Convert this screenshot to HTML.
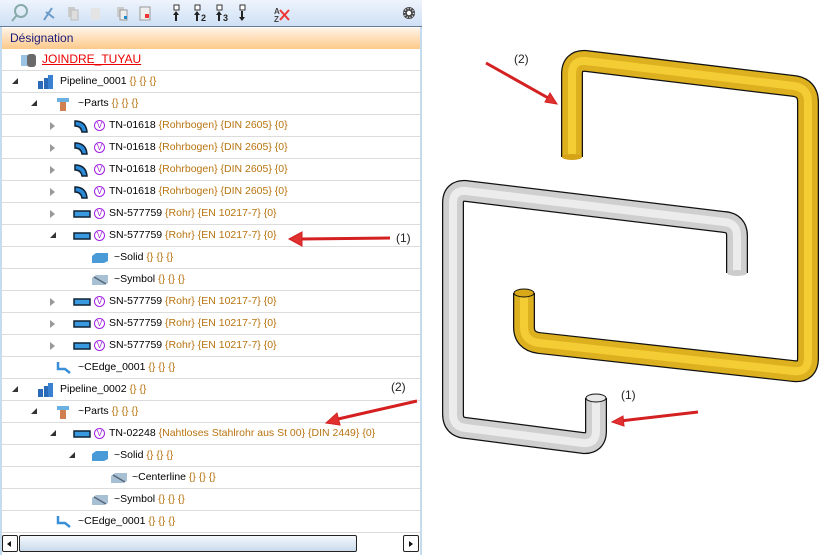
<!DOCTYPE html>
<html><head><meta charset="utf-8"><style>
*{margin:0;padding:0;box-sizing:border-box}
body{width:820px;height:555px;background:#fff;position:relative;overflow:hidden;font-family:"Liberation Sans",sans-serif;font-size:10.5px;color:#000}
.tb{position:absolute;left:0;top:0;width:422px;height:27px;background:linear-gradient(#eef4fc,#cfe0f5);border-bottom:1px solid #6a7a90}
.panel{position:absolute;left:0;top:27px;width:422px;height:528px;border-left:2px solid #c4dcee;border-right:2px solid #c4dcee}
.hdr{position:absolute;left:2px;top:28px;width:418px;height:21px;background:linear-gradient(#fff3e6,#fcc98a);color:#1a1a7a;font-size:12px;line-height:21px;padding-left:8px}
.row{position:absolute;left:2px;width:418px;height:22px;border-bottom:1px solid #dcdcdc;line-height:21px;white-space:nowrap}
.row span.t{position:absolute;top:0}
.b{color:#b87410}
.exp{position:absolute;top:7px;width:0;height:0}
.open{border-left:6px solid transparent;border-bottom:6px solid #333}
.closed{border-top:4px solid transparent;border-bottom:4px solid transparent;border-left:5px solid #999}
.v{position:absolute;top:5px;width:11px;height:11px;border:1px solid #a020e0;border-radius:50%;color:#a020e0;font-size:8px;line-height:9px;text-align:center}
.ic{position:absolute}
.sb{position:absolute;top:535px;height:17px;border:1px solid #222;border-radius:2px;background:linear-gradient(#f4f8fc,#c9daeb)}
.lbl{position:absolute;font-size:12px;color:#222}
</style></head><body>
<div class="tb">
<svg width="422" height="27" style="position:absolute;left:0;top:0">
<circle cx="21" cy="11" r="6" fill="none" stroke="#8aa" stroke-width="2"/><line x1="17" y1="15" x2="12" y2="21" stroke="#8aa" stroke-width="2"/>
<path d="M44 20 L52 8 M46 12 L54 18" stroke="#6a9ac8" stroke-width="2"/>
<rect x="68" y="7" width="7" height="10" fill="#ccc"/><rect x="71" y="10" width="7" height="10" fill="#ddd" stroke="#bbb"/>
<rect x="91" y="8" width="9" height="12" fill="#e4e4e4"/>
<rect x="117" y="7" width="7" height="10" fill="#ccc"/><rect x="120" y="10" width="7" height="10" fill="#eee" stroke="#999"/><rect x="124" y="16" width="3" height="3" fill="#28c"/>
<rect x="140" y="7" width="10" height="13" fill="#eee" stroke="#999"/><rect x="145" y="14" width="4" height="4" fill="#e33"/>
<g fill="#222"><rect x="174" y="5" width="5" height="5" fill="#fff" stroke="#333"/><path d="M176 11 l3 4h-6z M175 15h2v6h-2z"/>
<rect x="195" y="5" width="5" height="5" fill="#fff" stroke="#333"/><path d="M197 11 l3 4h-6z M196 15h2v6h-2z"/><text x="201" y="21" font-size="9" font-weight="bold">2</text>
<rect x="217" y="5" width="5" height="5" fill="#fff" stroke="#333"/><path d="M219 11 l3 4h-6z M218 15h2v6h-2z"/><text x="223" y="21" font-size="9" font-weight="bold">3</text>
<rect x="240" y="5" width="5" height="5" fill="#fff" stroke="#333"/><path d="M242 21 l3 -4h-6z M241 11h2v6h-2z"/></g>
<text x="274" y="14" font-size="8" font-weight="bold" fill="#444">A</text><text x="274" y="22" font-size="8" font-weight="bold" fill="#444">Z</text><path d="M280 10 l9 10 M289 10 l-9 10" stroke="#e33" stroke-width="2"/>
<circle cx="409" cy="13" r="6" fill="#444"/><circle cx="409" cy="13" r="4.5" fill="none" stroke="#eef4fc" stroke-width="1.5" stroke-dasharray="1 1.8"/><circle cx="409" cy="13" r="2.2" fill="#fff"/>
</svg></div>
<div class="panel"></div>
<div class="hdr">Désignation</div>

<div class="row" style="top:49px"><svg class="ic" style="left:18px;top:3px" width="18" height="16"><rect x="1" y="3" width="9" height="11" fill="#9bc3e6"/><rect x="7" y="2" width="9" height="13" rx="3" fill="#6a6a6a"/></svg><span class="t" style="left:40px;color:#e00;text-decoration:underline;font-size:12px">JOINDRE_TUYAU</span></div>
<div class="row" style="top:71px"><span class="exp open" style="left:10px"></span><svg class="ic" style="left:35px;top:3px" width="18" height="16"><rect x="1" y="7" width="5" height="8" fill="#2a6ab8"/><rect x="7" y="4" width="4" height="11" fill="#2a6ab8"/><rect x="11" y="1" width="5" height="14" fill="#3a80d0"/></svg><span class="t" style="left:58px">Pipeline_0001 <span class="b">{} {} {}</span></span></div>
<div class="row" style="top:93px"><span class="exp open" style="left:29px"></span><svg class="ic" style="left:54px;top:4px" width="14" height="15"><rect x="1" y="1" width="12" height="4" fill="#6ab0e0"/><rect x="4" y="5" width="6" height="9" fill="#d08050"/></svg><span class="t" style="left:76px">~Parts <span class="b">{} {} {}</span></span></div>

<div class="row" style="top:115px"><span class="exp closed" style="left:48px"></span><svg class="ic" style="left:71px;top:3px" width="18" height="16"><path d="M2 3 Q13 3 14 14 L9 14 Q8 8 2 8Z" fill="#2a8ad8" stroke="#123" stroke-width="1.5"/></svg><span class="v" style="left:92px">V</span><span class="t" style="left:107px">TN-01618 <span class="b">{Rohrbogen} {DIN 2605} {0}</span></span></div>
<div class="row" style="top:137px"><span class="exp closed" style="left:48px"></span><svg class="ic" style="left:71px;top:3px" width="18" height="16"><path d="M2 3 Q13 3 14 14 L9 14 Q8 8 2 8Z" fill="#2a8ad8" stroke="#123" stroke-width="1.5"/></svg><span class="v" style="left:92px">V</span><span class="t" style="left:107px">TN-01618 <span class="b">{Rohrbogen} {DIN 2605} {0}</span></span></div>
<div class="row" style="top:159px"><span class="exp closed" style="left:48px"></span><svg class="ic" style="left:71px;top:3px" width="18" height="16"><path d="M2 3 Q13 3 14 14 L9 14 Q8 8 2 8Z" fill="#2a8ad8" stroke="#123" stroke-width="1.5"/></svg><span class="v" style="left:92px">V</span><span class="t" style="left:107px">TN-01618 <span class="b">{Rohrbogen} {DIN 2605} {0}</span></span></div>
<div class="row" style="top:181px"><span class="exp closed" style="left:48px"></span><svg class="ic" style="left:71px;top:3px" width="18" height="16"><path d="M2 3 Q13 3 14 14 L9 14 Q8 8 2 8Z" fill="#2a8ad8" stroke="#123" stroke-width="1.5"/></svg><span class="v" style="left:92px">V</span><span class="t" style="left:107px">TN-01618 <span class="b">{Rohrbogen} {DIN 2605} {0}</span></span></div>
<div class="row" style="top:203px"><span class="exp closed" style="left:48px"></span><svg class="ic" style="left:71px;top:6px" width="18" height="10"><rect x="1" y="2" width="16" height="6" fill="#3a9ae0" stroke="#123" stroke-width="1.5"/></svg><span class="v" style="left:92px">V</span><span class="t" style="left:107px">SN-577759 <span class="b">{Rohr} {EN 10217-7} {0}</span></span></div>
<div class="row" style="top:225px"><span class="exp open" style="left:48px"></span><svg class="ic" style="left:71px;top:6px" width="18" height="10"><rect x="1" y="2" width="16" height="6" fill="#3a9ae0" stroke="#123" stroke-width="1.5"/></svg><span class="v" style="left:92px">V</span><span class="t" style="left:107px">SN-577759 <span class="b">{Rohr} {EN 10217-7} {0}</span></span></div>
<div class="row" style="top:247px"><svg class="ic" style="left:89px;top:5px" width="18" height="12"><path d="M1 4 L5 1 H17 V9 L13 11 H1Z" fill="#4a9ad8"/></svg><span class="t" style="left:112px">~Solid <span class="b">{} {} {}</span></span></div>
<div class="row" style="top:269px"><svg class="ic" style="left:89px;top:5px" width="18" height="12"><path d="M1 4 L5 1 H17 V9 L13 11 H1Z" fill="#a8c0d4"/><path d="M3 3 L15 10" stroke="#567" stroke-width="1.5"/></svg><span class="t" style="left:112px">~Symbol <span class="b">{} {} {}</span></span></div>
<div class="row" style="top:291px"><span class="exp closed" style="left:48px"></span><svg class="ic" style="left:71px;top:6px" width="18" height="10"><rect x="1" y="2" width="16" height="6" fill="#3a9ae0" stroke="#123" stroke-width="1.5"/></svg><span class="v" style="left:92px">V</span><span class="t" style="left:107px">SN-577759 <span class="b">{Rohr} {EN 10217-7} {0}</span></span></div>
<div class="row" style="top:313px"><span class="exp closed" style="left:48px"></span><svg class="ic" style="left:71px;top:6px" width="18" height="10"><rect x="1" y="2" width="16" height="6" fill="#3a9ae0" stroke="#123" stroke-width="1.5"/></svg><span class="v" style="left:92px">V</span><span class="t" style="left:107px">SN-577759 <span class="b">{Rohr} {EN 10217-7} {0}</span></span></div>
<div class="row" style="top:335px"><span class="exp closed" style="left:48px"></span><svg class="ic" style="left:71px;top:6px" width="18" height="10"><rect x="1" y="2" width="16" height="6" fill="#3a9ae0" stroke="#123" stroke-width="1.5"/></svg><span class="v" style="left:92px">V</span><span class="t" style="left:107px">SN-577759 <span class="b">{Rohr} {EN 10217-7} {0}</span></span></div>
<div class="row" style="top:357px"><svg class="ic" style="left:54px;top:4px" width="16" height="14"><path d="M2 1 V8 H9 L14 12" fill="none" stroke="#3a90d8" stroke-width="2.5"/></svg><span class="t" style="left:76px">~CEdge_0001 <span class="b">{} {} {}</span></span></div>
<div class="row" style="top:379px"><span class="exp open" style="left:10px"></span><svg class="ic" style="left:35px;top:3px" width="18" height="16"><rect x="1" y="7" width="5" height="8" fill="#2a6ab8"/><rect x="7" y="4" width="4" height="11" fill="#2a6ab8"/><rect x="11" y="1" width="5" height="14" fill="#3a80d0"/></svg><span class="t" style="left:58px">Pipeline_0002 <span class="b">{} {}</span></span></div>
<div class="row" style="top:401px"><span class="exp open" style="left:29px"></span><svg class="ic" style="left:54px;top:4px" width="14" height="15"><rect x="1" y="1" width="12" height="4" fill="#6ab0e0"/><rect x="4" y="5" width="6" height="9" fill="#d08050"/></svg><span class="t" style="left:76px">~Parts <span class="b">{} {} {}</span></span></div>
<div class="row" style="top:423px"><span class="exp open" style="left:48px"></span><svg class="ic" style="left:71px;top:6px" width="18" height="10"><rect x="1" y="2" width="16" height="6" fill="#3a9ae0" stroke="#123" stroke-width="1.5"/></svg><span class="v" style="left:92px">V</span><span class="t" style="left:107px">TN-02248 <span class="b">{Nahtloses Stahlrohr aus St 00} {DIN 2449} {0}</span></span></div>
<div class="row" style="top:445px"><span class="exp open" style="left:67px"></span><svg class="ic" style="left:89px;top:5px" width="18" height="12"><path d="M1 4 L5 1 H17 V9 L13 11 H1Z" fill="#4a9ad8"/></svg><span class="t" style="left:112px">~Solid <span class="b">{} {} {}</span></span></div>
<div class="row" style="top:467px"><svg class="ic" style="left:108px;top:5px" width="18" height="12"><path d="M1 4 L5 1 H17 V9 L13 11 H1Z" fill="#a8c0d4"/><path d="M3 3 L15 10" stroke="#567" stroke-width="1.5"/></svg><span class="t" style="left:130px">~Centerline <span class="b">{} {} {}</span></span></div>
<div class="row" style="top:489px"><svg class="ic" style="left:89px;top:5px" width="18" height="12"><path d="M1 4 L5 1 H17 V9 L13 11 H1Z" fill="#a8c0d4"/><path d="M3 3 L15 10" stroke="#567" stroke-width="1.5"/></svg><span class="t" style="left:112px">~Symbol <span class="b">{} {} {}</span></span></div>
<div class="row" style="top:511px"><svg class="ic" style="left:54px;top:4px" width="16" height="14"><path d="M2 1 V8 H9 L14 12" fill="none" stroke="#3a90d8" stroke-width="2.5"/></svg><span class="t" style="left:76px">~CEdge_0001 <span class="b">{} {} {}</span></span></div>

<div class="sb" style="left:2px;width:16px;background:#fff"></div>
<div class="sb" style="left:19px;width:338px"></div>
<div class="sb" style="left:403px;width:16px;background:#fff"></div>
<svg style="position:absolute;left:0;top:535px" width="422" height="18"><path d="M7 9 l4 -3 v6z" fill="#111"/><path d="M413 9 l-4 -3 v6z" fill="#111"/></svg>

<svg style="position:absolute;left:0;top:0" width="820" height="555">
<g fill="none" stroke-linejoin="round" stroke-linecap="butt">
<path d="M572 157 V74 Q572 60 586 61 L794 86 Q808 88 808 102 V358 Q808 373 793 371 L539 343 Q524 341 524 327 V293" stroke="#111" stroke-width="22"/>
<path d="M572 157 V74 Q572 60 586 61 L794 86 Q808 88 808 102 V358 Q808 373 793 371 L539 343 Q524 341 524 327 V293" stroke="#ddb020" stroke-width="19.5"/>
<path d="M572 157 V74 Q572 60 586 61 L794 86 Q808 88 808 102 V358 Q808 373 793 371 L539 343 Q524 341 524 327 V293" stroke="#f4cc34" stroke-width="8"/>
<path d="M737 273 V236 Q737 223 724 222 L466 191 Q453 190 453 203 V414 Q453 427 466 428 L583 443 Q596 444 596 431 V398" stroke="#111" stroke-width="22"/>
<path d="M737 273 V236 Q737 223 724 222 L466 191 Q453 190 453 203 V414 Q453 427 466 428 L583 443 Q596 444 596 431 V398" stroke="#cfcfcf" stroke-width="19.5"/>
<path d="M737 273 V236 Q737 223 724 222 L466 191 Q453 190 453 203 V414 Q453 427 466 428 L583 443 Q596 444 596 431 V398" stroke="#ececec" stroke-width="8"/>
</g>
<ellipse cx="524" cy="293" rx="10" ry="4" fill="#d8a818" stroke="#111"/>
<ellipse cx="596" cy="398" rx="10" ry="4" fill="#e8e8e8" stroke="#111"/>
<ellipse cx="572" cy="157" rx="10" ry="3" fill="#d4a416"/>
<ellipse cx="737" cy="273" rx="10" ry="3" fill="#ccc"/>
<g stroke="#d42020" stroke-width="3" fill="#e03030">
<line x1="486" y1="63" x2="550" y2="99"/><path d="M557 104 l-12 -2 l5 -9z" stroke-width="1"/>
<line x1="698" y1="412" x2="620" y2="421"/><path d="M612 422 l11 -6 l1 10z" stroke-width="1"/>
<line x1="390" y1="238" x2="300" y2="239"/><path d="M289 239 l13 -7 v14z" stroke-width="1"/>
<line x1="417" y1="401" x2="338" y2="419"/><path d="M326 423 l11 -10 l3 12z" stroke-width="1"/>
</g>
</svg>
<div class="lbl" style="left:396px;top:231px">(1)</div>
<div class="lbl" style="left:391px;top:380px">(2)</div>
<div class="lbl" style="left:514px;top:52px">(2)</div>
<div class="lbl" style="left:621px;top:388px">(1)</div>
</body></html>
